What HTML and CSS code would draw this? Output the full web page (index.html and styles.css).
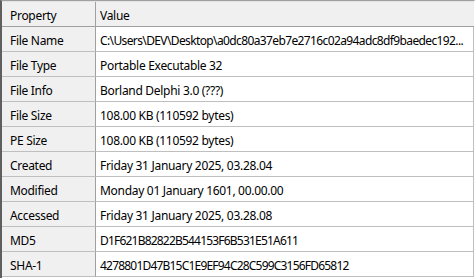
FILE: index.html
```html
<!DOCTYPE html>
<html>
<head>
<meta charset="utf-8">
<link rel="stylesheet" href="styles.css">
</head>
<body>
<div class="frame">
  <div class="grid">
    <div class="cell head key">Property</div>
    <div class="cell head val">Value</div>
    <div class="cell key">File Name</div>
    <div class="cell val"><span class="path">C:\Users\DEV\Desktop\a0dc80a37eb7e2716c02a94adc8df9baedec192...</span></div>
    <div class="cell key">File Type</div>
    <div class="cell val">Portable Executable 32</div>
    <div class="cell key">File Info</div>
    <div class="cell val">Borland Delphi 3.0 (???)</div>
    <div class="cell key">File Size</div>
    <div class="cell val">108.00 KB (110592 bytes)</div>
    <div class="cell key">PE Size</div>
    <div class="cell val">108.00 KB (110592 bytes)</div>
    <div class="cell key">Created</div>
    <div class="cell val">Friday 31 January 2025, 03.28.04</div>
    <div class="cell key">Modified</div>
    <div class="cell val">Monday 01 January 1601, 00.00.00</div>
    <div class="cell key">Accessed</div>
    <div class="cell val">Friday 31 January 2025, 03.28.08</div>
    <div class="cell key">MD5</div>
    <div class="cell val"><span class="hash">D1F621B82822B544153F6B531E51A611</span></div>
    <div class="cell key">SHA-1</div>
    <div class="cell val"><span class="hash">4278801D47B15C1E9EF94C28C599C3156FD65812</span></div>
  </div>
</div>
</body>
</html>
```
FILE: styles.css
```css
* { box-sizing: border-box; }
html, body { margin: 0; padding: 0; background: #ffffff; }
body {
  width: 475px;
  height: 278px;
  overflow: hidden;
  font-family: "Noto Sans", "Liberation Sans", sans-serif;
  font-size: 12px;
  letter-spacing: -0.3px;
  color: #000;
}
.frame {
  width: 475px;
  height: 278px;
  border-top: 1px solid #a0a0a0;
  border-left: 2px solid #5f5f5f;
  border-right: 1px solid #ffffff;
}
.grid {
  display: grid;
  grid-template-columns: 94px 1fr;
  grid-auto-rows: 25px;
  border-top: 1px solid #e3e3e3;
}
.cell {
  display: flex;
  align-items: center;
  border-bottom: 1px solid #bfbfbf;
  white-space: nowrap;
  overflow: hidden;
  padding-top: 2px;
}
.path {
  white-space: nowrap;
  letter-spacing: -0.62px;
}
.hash {
  letter-spacing: -0.8px;
}
.key {
  background: #f0f0f0;
  border-right: 1px solid #a0a0a0;
  padding-left: 8px;
}
.val {
  padding-left: 4px;
  border-right: 1px solid #bfbfbf;
}
.head { background: #f0f0f0; border-bottom-color: #a0a0a0; }
.head.val { border-right: none; }
```
